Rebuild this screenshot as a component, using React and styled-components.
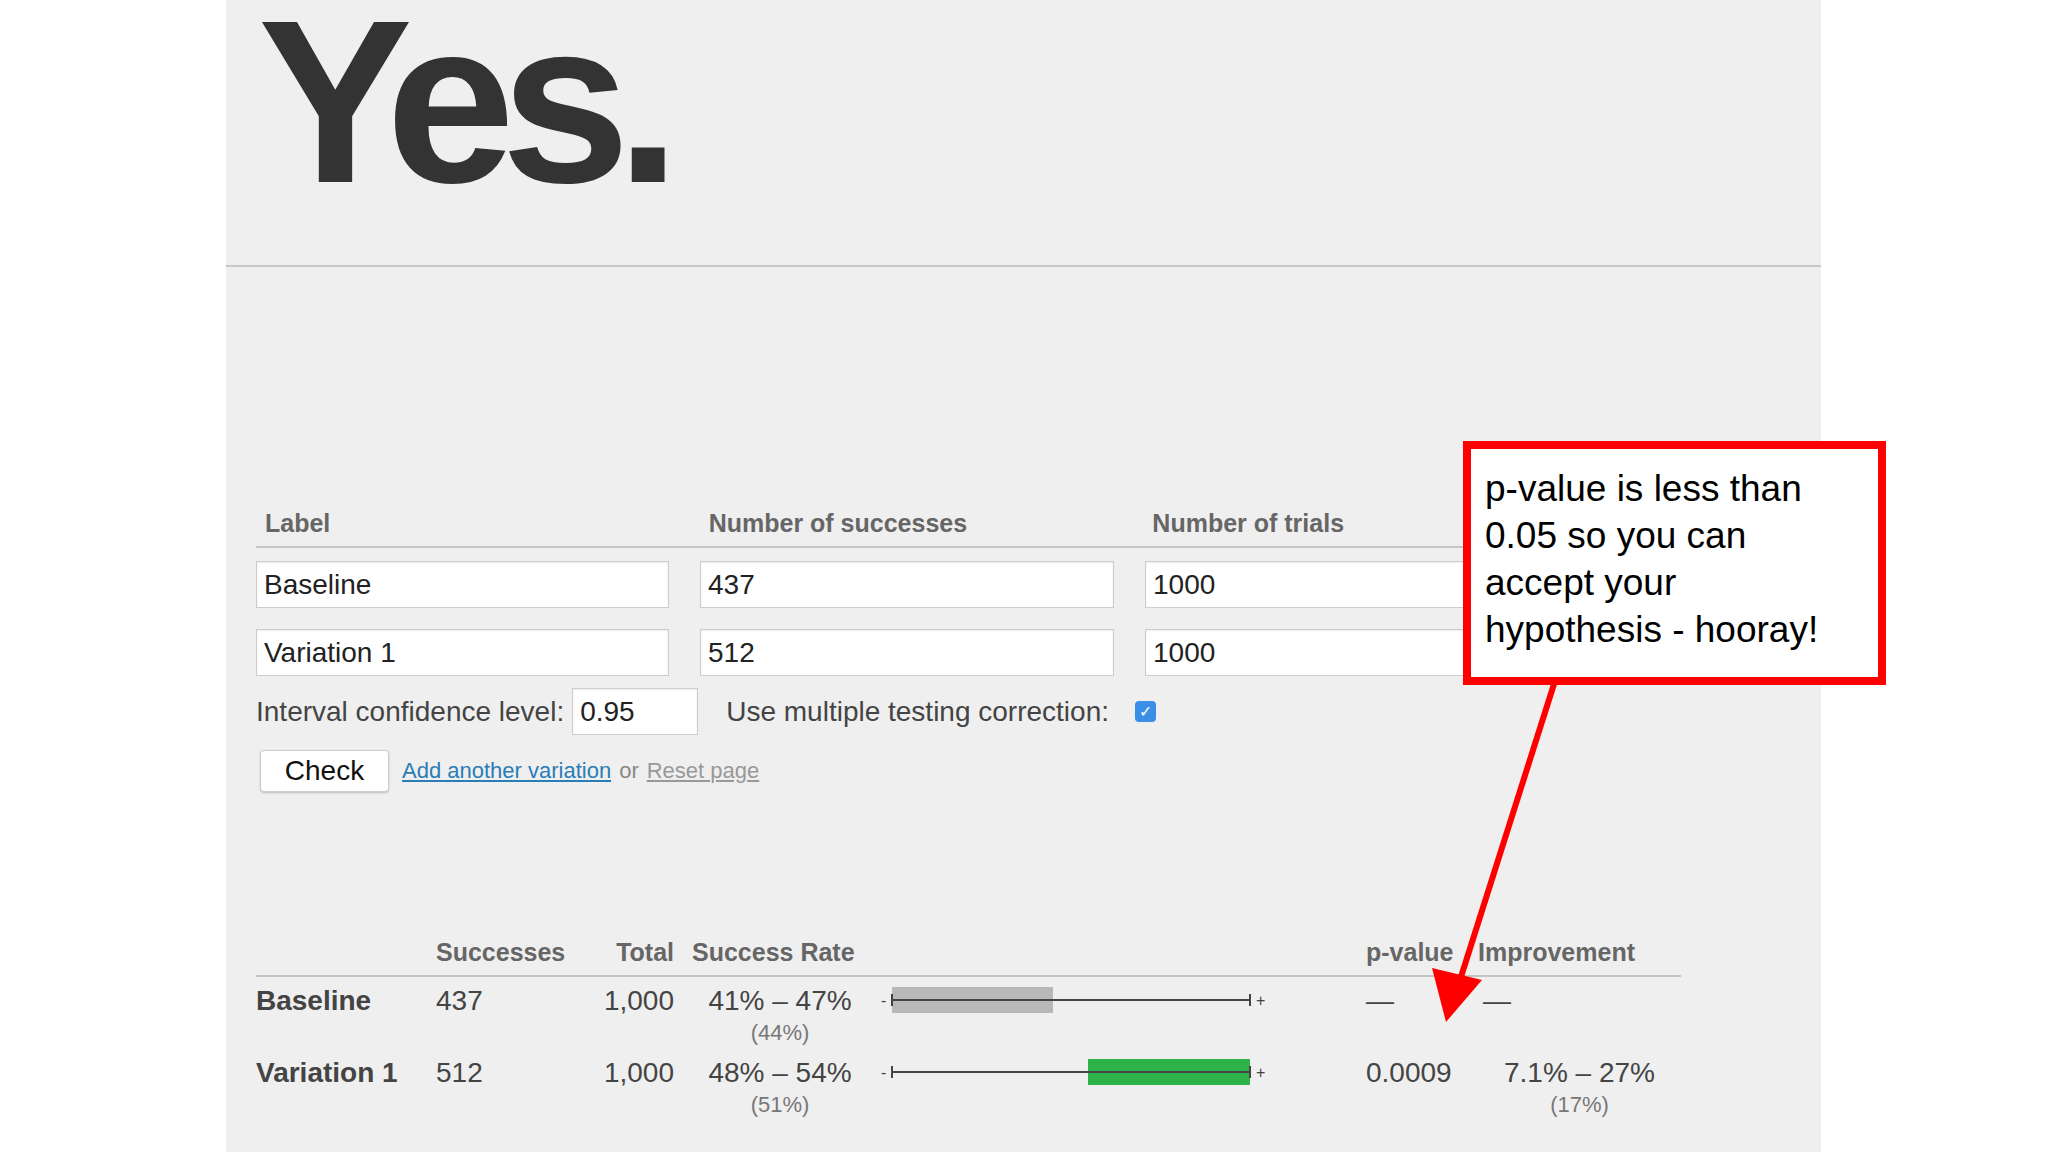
import React from "react";
import styled, { createGlobalStyle } from "styled-components";

const G = createGlobalStyle`
  html,body{margin:0;padding:0;background:#fff;}
  body{font-family:"Liberation Sans",Arial,sans-serif;}
`;
const Page = styled.div`width:2048px;height:1152px;position:relative;overflow:hidden;background:#fff;`;
const Panel = styled.div`margin-left:226px;width:1595px;height:1152px;background:#efefef;`;
const Hero = styled.div`height:267px;border-bottom:2px solid #c8c8c8;box-sizing:border-box;overflow:hidden;`;
const Title = styled.h1`margin:-14px 0 0 0;padding:0 0 0 32px;font-size:232px;font-weight:700;letter-spacing:-14px;color:#333;line-height:1;`;
const Form = styled.div`padding:242px 0 0 30px;`;
const HeadRow = styled.div`display:flex;gap:31px;border-bottom:2px solid #c4c4c4;width:1300px;padding-bottom:8px;`;
const Head = styled.div`width:${p=>p.w}px;padding-left:9px;box-sizing:border-box;font-size:25px;font-weight:700;color:#666;`;
const InRow = styled.div`display:flex;gap:31px;margin-top:${p=>p.mt}px;`;
const Input = styled.div`width:${p=>p.w}px;height:47px;box-sizing:border-box;background:#fff;border:1px solid #ccc;box-shadow:inset 0 1px 2px rgba(0,0,0,.08);font-size:28px;color:#222;display:flex;align-items:center;padding-left:7px;`;
const Conf = styled.div`display:flex;align-items:center;margin-top:12px;font-size:28px;color:#444;gap:8px;`;
const Check = styled.div`width:21px;height:21px;border-radius:4px;background:#3b8fe6;color:#fff;font-size:16px;display:flex;align-items:center;justify-content:center;margin-left:18px;`;
const Actions = styled.div`display:flex;align-items:center;margin-top:15px;gap:8px;font-size:22px;color:#888;`;
const Btn = styled.div`margin-left:4px;width:127px;height:40px;background:#fff;border:1px solid #ccc;border-radius:4px;box-shadow:0 1px 2px rgba(0,0,0,.2);display:flex;align-items:center;justify-content:center;font-size:28px;color:#111;margin-right:5px;`;
const Link = styled.span`text-decoration:underline;color:${p=>p.c};`;
const Results = styled.div`margin:146px 0 0 30px;width:1425px;display:grid;grid-template-columns:180px 120px 132px 184px 494px 112px 203px;`;
const TH = styled.div`font-size:25px;font-weight:700;color:#666;padding:0 ${p=>p.pr||0}px 8px ${p=>p.pl||0}px;text-align:${p=>p.a||"left"};border-bottom:2px solid #c4c4c4;`;
const TD = styled.div`font-size:28px;color:#444;font-weight:${p=>p.b?700:400};text-align:${p=>p.a||"left"};padding:${p=>p.first?10:8}px ${p=>p.pr||0}px 0 0;height:${p=>p.h}px;line-height:28px;`;
const Sub = styled.div`font-size:22px;color:#777;margin-top:4px;`;
const Callout = styled.div`position:absolute;left:1463px;top:441px;width:423px;height:244px;box-sizing:border-box;border:8px solid #ff0000;background:#fff;padding:16px 0 0 14px;font-size:37px;line-height:47px;color:#000;`;
const Arrow = styled.svg`position:absolute;left:0;top:0;pointer-events:none;`;

const Bar = ({ from, to, color }) => (
  <svg width="494" height="30" viewBox="0 0 494 30" style={{ marginTop: -2 }}>
    <text x="9" y="21" fontSize="16" fill="#444" fontFamily="Liberation Sans">-</text>
    <rect x={from} y="2" width={to - from} height="26" fill={color} />
    <line x1="20" y1="15" x2="378" y2="15" stroke="#444" strokeWidth="2" />
    <line x1="20" y1="9" x2="20" y2="21" stroke="#444" strokeWidth="2" />
    <line x1="378" y1="9" x2="378" y2="21" stroke="#444" strokeWidth="2" />
    <text x="384" y="21" fontSize="16" fill="#444" fontFamily="Liberation Sans">+</text>
  </svg>
);

export default function App() {
  return (
    <Page>
      <G />
      <Panel>
        <Hero><Title>Yes.</Title></Hero>
        <Form>
          <HeadRow><Head w={413}>Label</Head><Head w={413}>Number of successes</Head><Head w={413}>Number of trials</Head></HeadRow>
          <InRow mt={13}><Input w={413}>Baseline</Input><Input w={414}>437</Input><Input w={400}>1000</Input></InRow>
          <InRow mt={21}><Input w={413}>Variation 1</Input><Input w={414}>512</Input><Input w={400}>1000</Input></InRow>
          <Conf>Interval confidence level:<Input w={126}>0.95</Input><span style={{marginLeft:20}}>Use multiple testing correction:</span><Check>✓</Check></Conf>
          <Actions><Btn>Check</Btn><Link c="#2a7db5">Add another variation</Link> or <Link c="#999">Reset page</Link></Actions>
        </Form>
        <Results>
          <TH /><TH>Successes</TH><TH a="right" pr={14}>Total</TH><TH pl={4}>Success Rate</TH><TH /><TH>p-value</TH><TH>Improvement</TH>
          <TD b first h={64}>Baseline</TD><TD first>437</TD><TD first a="right" pr={14}>1,000</TD>
          <TD first a="center">41% – 47%<Sub>(44%)</Sub></TD><TD first><Bar from={20} to={181} color="#b8b8b8" /></TD>
          <TD first>—</TD><TD first style={{paddingLeft:5}}>—</TD>
          <TD b h={70}>Variation 1</TD><TD>512</TD><TD a="right" pr={14}>1,000</TD>
          <TD a="center">48% – 54%<Sub>(51%)</Sub></TD><TD><Bar from={216} to={378} color="#2db34a" /></TD>
          <TD>0.0009</TD><TD a="center">7.1% – 27%<Sub>(17%)</Sub></TD>
        </Results>
      </Panel>
      <Callout>p-value is less than<br />0.05 so you can<br />accept your<br />hypothesis - hooray!</Callout>
      <Arrow width="2048" height="1152">
        <line x1="1554" y1="684" x2="1460" y2="980" stroke="#ff0000" strokeWidth="6" />
        <polygon points="1446,1022 1432,968 1482,980" fill="#ff0000" />
      </Arrow>
    </Page>
  );
}
